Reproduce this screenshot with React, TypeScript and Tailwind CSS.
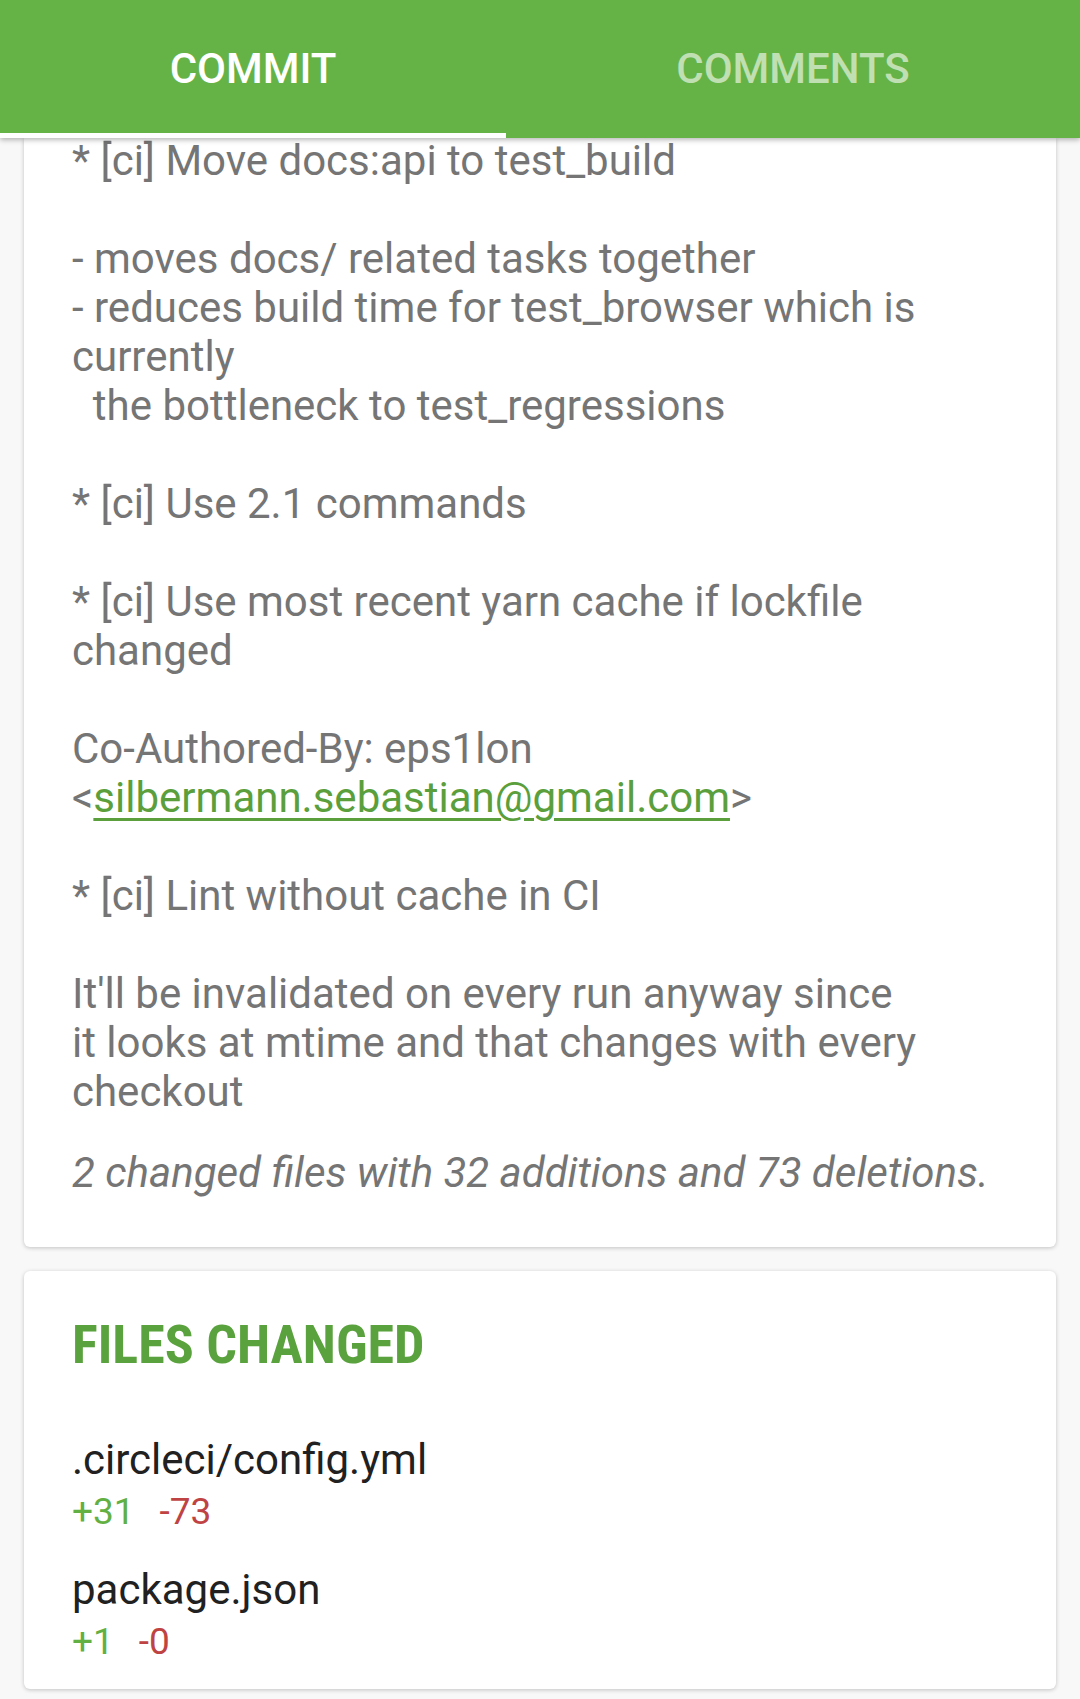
const MESSAGE_TOP = `* [ci] Move docs:api to test_build

- moves docs/ related tasks together
- reduces build time for test_browser which is currently
  the bottleneck to test_regressions

* [ci] Use 2.1 commands

* [ci] Use most recent yarn cache if lockfile changed

Co-Authored-By: eps1lon <`;

const MESSAGE_BOTTOM = `>

* [ci] Lint without cache in CI

It'll be invalidated on every run anyway since
it looks at mtime and that changes with every checkout`;

const FILES = [
  { name: ".circleci/config.yml", added: 31, removed: 73 },
  { name: "package.json", added: 1, removed: 0 },
];

function Tabs() {
  return (
    <div className="relative z-10 flex h-[138px] bg-[#65b346] shadow-[0_2px_5px_rgba(0,0,0,0.28)]">
      <div className="relative flex w-[506px] items-center justify-center">
        <span className="text-[42px] font-medium uppercase leading-none text-white">Commit</span>
        <span className="absolute bottom-0 left-0 h-[5px] w-full bg-white" />
      </div>
      <div className="flex flex-1 items-center justify-center">
        <span className="text-[42px] font-medium uppercase leading-none text-white/60">Comments</span>
      </div>
    </div>
  );
}

export default function App() {
  return (
    <div className="min-h-[1699px] bg-[#f8f8f8] font-['Roboto',sans-serif]">
      <Tabs />

      <div className="flex flex-col gap-[24px] px-[24px] pb-[12px]">
        <section className="rounded-b-[6px] bg-white px-[48px] pb-[50px] shadow-[0_1px_4px_rgba(0,0,0,0.22)]">
          <div className="-mt-[2px] whitespace-pre-wrap text-[42px] leading-[49px] text-[#757575]">
            {MESSAGE_TOP}
            <a className="text-[#5b9f3d] underline decoration-[3px] underline-offset-[6px]">
              silbermann.sebastian@gmail.com
            </a>
            {MESSAGE_BOTTOM}
          </div>
          <p className="mt-[32px] whitespace-nowrap text-[42px] italic leading-[49px] text-[#757575]">
            2 changed files with 32 additions and 73 deletions.
          </p>
        </section>

        <section className="rounded-[6px] bg-white px-[48px] pb-[26px] pt-[42px] shadow-[0_1px_4px_rgba(0,0,0,0.22)]">
          <h2 className="font-['Roboto_Condensed',Roboto,sans-serif] text-[54px] font-bold uppercase leading-[63px] text-[#5aa23d] font-stretch-condensed">
            Files changed
          </h2>
          <div className="mt-[27px]">
            {FILES.map((f) => (
              <div key={f.name} className="pt-[32px]">
                <div className="text-[42px] leading-[49px] text-[#212121]">{f.name}</div>
                <div className="mt-[7px] flex gap-[25px] text-[37px] leading-[42px]">
                  <span className="text-[#62b043]">+{f.added}</span>
                  <span className="text-[#c04343]">-{f.removed}</span>
                </div>
              </div>
            ))}
          </div>
        </section>
      </div>
    </div>
  );
}
